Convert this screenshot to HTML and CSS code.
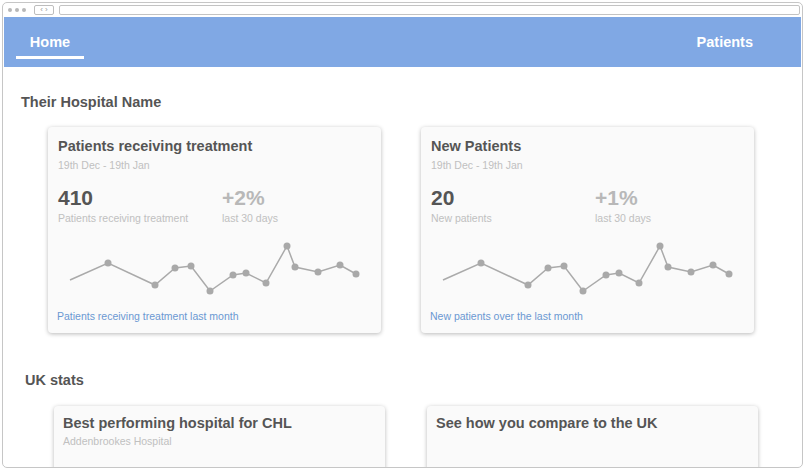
FILE: index.html
```html
<!DOCTYPE html>
<html>

<head>
    <meta charset="UTF-8">
    <title>Dashboard</title>
    <link rel="stylesheet" href="styles.css">
</head>

<body>
    <div class="window">
        <div class="toolbar">
            <span class="dot"></span>
            <span class="dot"></span>
            <span class="dot"></span>
            <span class="nav-box">&#x2039; &#x203A;</span>
            <span class="address"></span>
        </div>

        <div class="header">
            <a class="tab active">Home</a>
            <a class="tab">Patients</a>
        </div>

        <div class="section">
            <h2 class="section-title">Their Hospital Name</h2>
            <div class="card-row">
                <div class="card">
                    <div class="card-title">Patients receiving treatment</div>
                    <div class="card-date">19th Dec - 19th Jan</div>
                    <div class="stats">
                        <div class="stat">
                            <div class="stat-value">410</div>
                            <div class="stat-label">Patients receiving treatment</div>
                        </div>
                        <div class="stat">
                            <div class="stat-value light">+2%</div>
                            <div class="stat-label">last 30 days</div>
                        </div>
                    </div>
                    <svg class="chart" width="333" height="60" viewBox="0 0 333 60">
                        <polyline points="22,41 60,24 107,46 127,29 143,27 162,52 185,36 198,34 218,44 239,7 247,28 270,33 292,26 308,35" />
                        <circle cx="60" cy="24" r="3.5" />
                        <circle cx="107" cy="46" r="3.5" />
                        <circle cx="127" cy="29" r="3.5" />
                        <circle cx="143" cy="27" r="3.5" />
                        <circle cx="162" cy="52" r="3.5" />
                        <circle cx="185" cy="36" r="3.5" />
                        <circle cx="198" cy="34" r="3.5" />
                        <circle cx="218" cy="44" r="3.5" />
                        <circle cx="239" cy="7" r="3.5" />
                        <circle cx="247" cy="28" r="3.5" />
                        <circle cx="270" cy="33" r="3.5" />
                        <circle cx="292" cy="26" r="3.5" />
                        <circle cx="308" cy="35" r="3.5" />
                    </svg>
                    <a class="card-link">Patients receiving treatment last month</a>
                </div>

                <div class="card">
                    <div class="card-title">New Patients</div>
                    <div class="card-date">19th Dec - 19th Jan</div>
                    <div class="stats">
                        <div class="stat">
                            <div class="stat-value">20</div>
                            <div class="stat-label">New patients</div>
                        </div>
                        <div class="stat">
                            <div class="stat-value light">+1%</div>
                            <div class="stat-label">last 30 days</div>
                        </div>
                    </div>
                    <svg class="chart" width="333" height="60" viewBox="0 0 333 60">
                        <polyline points="22,41 60,24 107,46 127,29 143,27 162,52 185,36 198,34 218,44 239,7 247,28 270,33 292,26 308,35" />
                        <circle cx="60" cy="24" r="3.5" />
                        <circle cx="107" cy="46" r="3.5" />
                        <circle cx="127" cy="29" r="3.5" />
                        <circle cx="143" cy="27" r="3.5" />
                        <circle cx="162" cy="52" r="3.5" />
                        <circle cx="185" cy="36" r="3.5" />
                        <circle cx="198" cy="34" r="3.5" />
                        <circle cx="218" cy="44" r="3.5" />
                        <circle cx="239" cy="7" r="3.5" />
                        <circle cx="247" cy="28" r="3.5" />
                        <circle cx="270" cy="33" r="3.5" />
                        <circle cx="292" cy="26" r="3.5" />
                        <circle cx="308" cy="35" r="3.5" />
                    </svg>
                    <a class="card-link">New patients over the last month</a>
                </div>
            </div>
        </div>

        <div class="section uk">
            <h2 class="section-title">UK stats</h2>
            <div class="card-row">
                <div class="card small">
                    <div class="card-title">Best performing hospital for CHL</div>
                    <div class="card-date">Addenbrookes Hospital</div>
                </div>
                <div class="card small">
                    <div class="card-title">See how you compare to the UK</div>
                </div>
            </div>
        </div>
    </div>
</body>

</html>
```

FILE: styles.css
```css
body {
    margin: 0;
    background-color: #fff;
    font-family: "Liberation Sans", Arial, sans-serif;
}

.window {
    box-sizing: border-box;
    width: 801px;
    height: 466px;
    margin: 2px 0 0 2px;
    border: 1px solid #c6c6c6;
    border-radius: 5px;
    overflow: hidden;
    background-color: #fff;
}

.toolbar {
    height: 14px;
    display: flex;
    align-items: center;
    padding: 0 2px 0 5px;
}

.dot {
    width: 4px;
    height: 4px;
    margin-right: 3px;
    border-radius: 50%;
    background-color: #b8b8b8;
}

.nav-box {
    width: 18px;
    height: 8px;
    margin-left: 5px;
    border: 1px solid #bdbdbd;
    border-radius: 2px;
    color: #999;
    font-size: 8px;
    line-height: 8px;
    text-align: center;
}

.address {
    flex: 1;
    height: 8px;
    margin-left: 5px;
    border: 1px solid #c3c3c3;
    border-radius: 2px;
}

.header {
    height: 50px;
    margin: 0 1px;
    display: flex;
    justify-content: space-between;
    align-items: flex-start;
    background-color: #80a8e4;
}

.tab {
    padding: 17px 0 5px;
    color: #fff;
    font-size: 14.5px;
    font-weight: bold;
    line-height: 17px;
    text-align: center;
}

.tab.active {
    width: 68px;
    margin-left: 12px;
    border-bottom: 3px solid #fff;
}

.tab:last-child {
    margin-right: 48px;
}

.section {
    padding-left: 18px;
}

.section-title {
    margin: 27px 0 16px;
    color: #555;
    font-size: 14.5px;
    font-weight: bold;
    line-height: 17px;
}

.card-row {
    display: flex;
    gap: 40px;
    padding-left: 27px;
}

.card {
    box-sizing: border-box;
    width: 333px;
    height: 206px;
    padding: 10px 10px 0;
    background-color: #fafafa;
    border-radius: 4px;
    box-shadow: 0 1px 4px rgba(0, 0, 0, 0.28);
}

.card-title {
    color: #555;
    font-size: 14.5px;
    font-weight: bold;
    line-height: 18px;
}

.card-date {
    margin-top: 4px;
    color: #c0c0c0;
    font-size: 10.5px;
    line-height: 13px;
}

.stats {
    display: flex;
    margin-top: 14px;
}

.stat {
    flex: none;
    width: 164px;
}

.stat-value {
    color: #555;
    font-size: 21px;
    font-weight: bold;
    line-height: 24px;
}

.stat-value.light {
    color: #b8b8b8;
}

.stat-label {
    margin-top: 2px;
    color: #c0c0c0;
    font-size: 10.5px;
    line-height: 13px;
}

.chart {
    display: block;
    margin: 14px 0 0 -10px;
}

.chart polyline {
    fill: none;
    stroke: #aaa;
    stroke-width: 1.5;
}

.chart circle {
    fill: #a9a9a9;
}

.card-link {
    display: block;
    margin: 11px 0 0 -1px;
    color: #6a98d2;
    font-size: 10.5px;
    line-height: 13px;
}

.section.uk {
    padding-left: 22px;
}

.section.uk .section-title {
    margin: 39px 0 17px;
}

.section.uk .card-row {
    gap: 42px;
    padding-left: 29px;
}

.card.small {
    width: 331px;
    height: 90px;
    padding: 8px 10px 0 9px;
}

.card.small .card-date {
    margin-top: 3px;
}
```
